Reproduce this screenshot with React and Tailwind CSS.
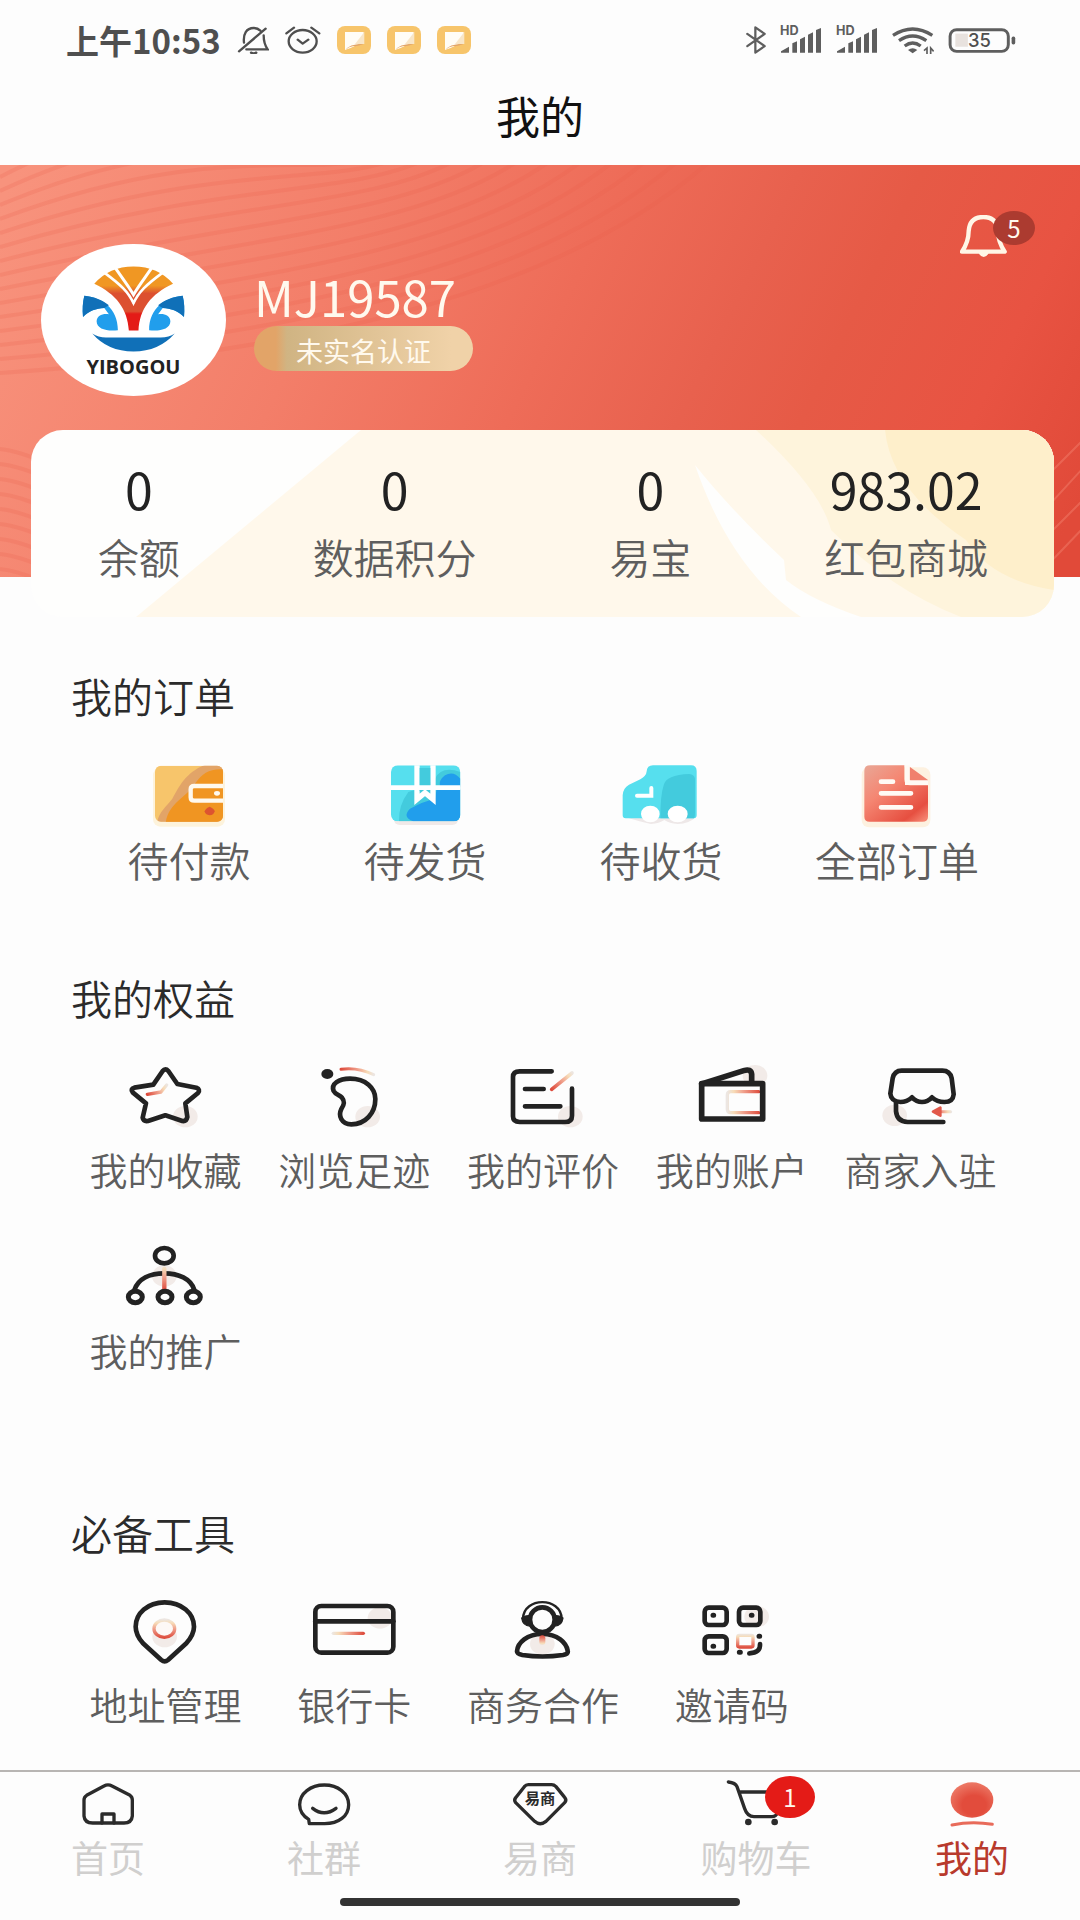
// Fading red accent used by the line icons
const Fade = ({ id, x1, y1, x2, y2 }) => (
  <linearGradient id={id} gradientUnits="userSpaceOnUse" x1={x1} y1={y1} x2={x2} y2={y2}>
    <stop offset="0" stopColor="#dd4b3c" />
    <stop offset="0.5" stopColor="#f0a08c" />
    <stop offset="0.8" stopColor="#f7dcb8" />
    <stop offset="1" stopColor="#ece6e2" />
  </linearGradient>
);

const Blob = ({ cx, cy }) => <ellipse cx={cx} cy={cy} rx="37" ry="32" fill="#f2ebe8" stroke="none" />;

const LineIcon = ({ children }) => (
  <svg
    viewBox="0 0 240 192"
    className="h-16 w-20 overflow-visible"
    fill="none"
    stroke="#222"
    strokeWidth="14"
    strokeLinecap="round"
    strokeLinejoin="round"
    aria-hidden="true"
  >
    {children}
  </svg>
);

//Order icons
const PayIcon = () => (
  <svg viewBox="0 0 240 192" className="h-16 w-20 overflow-visible" fill="none" aria-hidden="true">
    <rect x="12" y="18" width="216" height="176" rx="22" fill="#fdf3dc" />
    <clipPath id="payClip">
      <rect x="18" y="11" width="204" height="168" rx="18" />
    </clipPath>
    <g clipPath="url(#payClip)">
      <rect x="18" y="11" width="204" height="168" fill="#f7c56b" />
      <path d="M222 8H170C110 30 90 75 70 110C50 135 30 150 24 182H222Z" fill="#e2a468" />
      <path d="M222 22C180 20 160 35 140 62C110 110 60 120 50 182H222Z" fill="#f09522" />
      <path d="M232 72H136Q125 72 125 82V106Q125 116 136 116H232" stroke="#fff9ee" strokeWidth="13" fill="#f09522" />
    </g>
    <ellipse cx="204" cy="94" rx="9" ry="7" fill="#fff9ee" />
    <path d="M182 134Q198 142 197 148Q194 160 182 160Q168 158 167 148Q168 140 182 134Z" fill="#dd5430" />
  </svg>
);

const ShipIcon = () => (
  <svg viewBox="0 0 240 192" className="h-16 w-20 overflow-visible" fill="none" aria-hidden="true">
    <rect x="26" y="22" width="194" height="167" rx="18" fill="#f0e9e8" />
    <clipPath id="shipClip">
      <rect x="18" y="10" width="208" height="168" rx="20" />
    </clipPath>
    <g clipPath="url(#shipClip)">
      <rect x="18" y="10" width="208" height="168" fill="#56dfee" />
      <path d="M226 30Q170 10 150 50Q110 80 70 90Q40 130 42 178H226Z" fill="#43cbdd" />
      <path d="M226 50Q205 25 180 40Q160 55 165 74H226Z" fill="#219eec" />
      <path d="M226 82H155L150 110Q115 118 75 140Q50 165 85 178H226Z" fill="#219eec" />
      <path d="M10 77H232" stroke="#fff" strokeWidth="14" />
      <path d="M96 0V112L120 92L144 112V0" stroke="#fff" strokeWidth="16" />
      <path d="M104 18H136V82L120 78L104 88Z" fill="#43cbdd" />
      <path d="M90 77H150" stroke="#fff" strokeWidth="14" />
    </g>
  </svg>
);

const ReceiveIcon = () => (
  <svg viewBox="0 0 240 192" className="h-16 w-20 overflow-visible" fill="none" aria-hidden="true">
    <path d="M12 165H225Q205 185 170 186Q145 184 130 174Q115 184 90 186Q60 180 12 165Z" fill="#eee8e8" />
    <path d="M96 10H210Q227 10 227 27V160Q227 169 218 169H14Q5 169 5 160V100Q6 78 24 68L58 52Q76 42 77 28Q78 10 96 10Z" fill="#56dfee" />
    <path d="M205 36Q135 38 128 70Q118 100 118 169H218Q222 169 222 150V50Q220 38 205 36Z" fill="#43cbdd" />
    <path d="M91 78V101H48" stroke="#fff" strokeWidth="12" strokeLinecap="round" />
    <ellipse cx="88" cy="156" rx="28" ry="25" fill="#fff" />
    <ellipse cx="170" cy="156" rx="30" ry="25" fill="#fff" />
  </svg>
);

const AllOrdersIcon = () => (
  <svg viewBox="0 0 240 192" className="h-16 w-20 overflow-visible" fill="none" aria-hidden="true">
    <linearGradient id="docFill" x1="0" y1="0" x2="0.9" y2="1">
      <stop offset="0" stopColor="#e9a796" />
      <stop offset="0.4" stopColor="#f58672" />
      <stop offset="0.85" stopColor="#e64f40" />
      <stop offset="1" stopColor="#f4826e" />
    </linearGradient>
    <rect x="14" y="16" width="206" height="180" rx="22" fill="#fdf1e0" />
    <path d="M40 10H142V52Q142 70 160 70H213V164Q213 179 196 179H38Q22 179 22 164V26Q22 10 40 10Z" fill="url(#docFill)" />
    <path d="M158 14L213 54V58H166Q158 58 158 50Z" fill="#f0806d" />
    <path d="M151 10V62H213" stroke="#fffaf4" strokeWidth="14" />
    <path d="M72 59H108M72 94H162M72 136H162" stroke="#fffaf4" strokeWidth="14" strokeLinecap="round" />
  </svg>
);

//Benefit icons
const StarIcon = () => (
  <LineIcon>
    <Fade id="starFade" x1="67" y1="94" x2="125" y2="65" />
    <Blob cx="181" cy="161" />
    <path d="M113 24Q121 14 130 24L157 63L214 74Q227 79 219 90L181 121L187 162Q184 176 172 174L121 157L69 174Q55 176 53 164L63 121L23 88Q15 78 28 74L85 65Z" />
    <path d="M67 94L108 87L125 66" stroke="url(#starFade)" strokeWidth="10" />
  </LineIcon>
);

const FootIcon = () => (
  <LineIcon>
    <Fade id="footFade" x1="81" y1="19" x2="179" y2="35" />
    <Blob cx="161" cy="161" />
    <ellipse cx="40" cy="33" rx="18" ry="15" fill="#222" stroke="none" />
    <path d="M81 19Q131 12 179 35" stroke="url(#footFade)" strokeWidth="9" />
    <path d="M59 84C50 62 75 47 108 47C155 47 184 75 184 108C184 150 155 184 112 184C82 184 72 158 82 138C90 126 94 116 84 104C76 96 64 94 59 84Z" />
  </LineIcon>
);

const ReviewIcon = () => (
  <LineIcon>
    <Fade id="reviewFade" x1="146" y1="79" x2="209" y2="29" />
    <Blob cx="202" cy="161" />
    <path d="M146 25H50Q30 25 30 42V160Q30 177 50 177H186Q207 177 207 158V77M66 78H122M66 130H172" />
    <path d="M146 79L207 30" stroke="url(#reviewFade)" strokeWidth="11" />
  </LineIcon>
);

const AccountIcon = () => (
  <LineIcon>
    <Fade id="accountFade" x1="204" y1="90" x2="106" y2="90" />
    <Blob cx="189" cy="38" />
    <path d="M200 86H116Q106 86 106 96V139Q106 149 116 149H200" stroke="url(#accountFade)" strokeWidth="10" />
    <path d="M29 63L155 23Q177 16 179 34V60" strokeWidth="17" />
    <path d="M29 62H212V168H29Z" strokeWidth="17" />
  </LineIcon>
);

const ShopIcon = () => (
  <LineIcon>
    <Fade id="shopFade" x1="160" y1="146" x2="211" y2="146" />
    <Blob cx="41" cy="157" />
    <path d="M62 23H184Q207 23 212 46L218 94Q216 117 190 117Q168 117 153 103Q140 117 123 117Q106 117 93 103Q78 117 58 117Q30 115 28 92L35 46Q40 23 62 23Z" />
    <path d="M45 118V145Q48 176 80 177H187" />
    <path d="M182 146H209" stroke="url(#shopFade)" strokeWidth="9" />
    <path d="M156 146L178 134V158Z" fill="#e1584a" stroke="#e1584a" strokeWidth="8" />
  </LineIcon>
);

const PromoteIcon = () => (
  <LineIcon>
    <Fade id="promoteFade" x1="118" y1="138" x2="118" y2="60" />
    <Blob cx="118" cy="96" />
    <ellipse cx="118" cy="35" rx="28" ry="23" />
    <path d="M28 138C40 104 75 88 118 88C160 88 198 104 208 138" />
    <path d="M118 74V138" stroke="url(#promoteFade)" strokeWidth="13" />
    <ellipse cx="31" cy="159" rx="21" ry="17" strokeWidth="15" />
    <ellipse cx="120" cy="159" rx="21" ry="17" strokeWidth="15" />
    <ellipse cx="205" cy="159" rx="21" ry="17" strokeWidth="15" />
  </LineIcon>
);

//Tool icons
const AddressIcon = () => (
  <LineIcon>
    <Fade id="addressFade" x1="118" y1="120" x2="118" y2="64" />
    <Blob cx="119" cy="116" />
    <path d="M119 13C68 13 32 46 32 86C32 108 42 122 54 136L109 186Q119 194 129 186L184 136C196 122 207 108 207 86C207 46 170 13 119 13Z" />
    <ellipse cx="118" cy="92" rx="31" ry="26" stroke="url(#addressFade)" strokeWidth="10" fill="#fdf8f6" />
  </LineIcon>
);

const BankIcon = () => (
  <LineIcon>
    <Fade id="bankFade" x1="150" y1="106" x2="55" y2="106" />
    <Blob cx="198" cy="60" />
    <rect x="4" y="24" width="234" height="140" rx="18" />
    <path d="M4 70H238" />
    <path d="M58 106H148" stroke="url(#bankFade)" strokeWidth="10" />
  </LineIcon>
);

const BusinessIcon = () => (
  <LineIcon>
    <Fade id="businessFade" x1="118" y1="112" x2="118" y2="142" />
    <Blob cx="118" cy="138" />
    <path d="M60 62C62 -4 174 -4 176 62" strokeWidth="7" />
    <path d="M56 60Q72 50 84 54V84Q60 86 56 60ZM180 60Q164 50 152 54V84Q176 86 180 60Z" fill="#222" strokeWidth="4" />
    <ellipse cx="118" cy="65" rx="37" ry="37" fill="#fdfdfd" />
    <path d="M118 108C72 108 44 134 42 160C42 167 48 169 58 171Q118 180 180 171C190 169 196 166 194 158C190 134 164 108 118 108Z" />
    <path d="M118 121V132" stroke="url(#businessFade)" strokeWidth="18" />
  </LineIcon>
);

const InviteIcon = () => (
  <LineIcon>
    <Fade id="inviteFade" x1="160" y1="150" x2="160" y2="108" />
    <Blob cx="194" cy="56" />
    <rect x="38" y="29" width="66" height="52" rx="12" />
    <rect x="141" y="29" width="64" height="52" rx="12" />
    <rect x="38" y="115" width="66" height="50" rx="12" />
    <path d="M204 138Q206 165 172 166" />
    <path d="M63 52H65M178 52H180M63 145H65M201 115H203M142 163H145" strokeWidth="15" />
    <rect x="137" y="112" width="46" height="35" rx="5" stroke="url(#inviteFade)" strokeWidth="10" />
  </LineIcon>
);

//Tab bar icons
const TabIcon = ({ children }) => (
  <svg
    viewBox="0 0 180 144"
    className="h-12 w-15 overflow-visible"
    fill="none"
    stroke="#2b2b2b"
    strokeWidth="10"
    strokeLinecap="round"
    strokeLinejoin="round"
    aria-hidden="true"
  >
    {children}
  </svg>
);

const HomeIcon = () => (
  <TabIcon>
    <path d="M78 18Q90 11 102 18L156 46Q163 51 163 60V108Q161 129 138 129H44Q20 129 18 108V60Q18 51 26 46Z" />
    <path d="M72 129V102H108V129" />
  </TabIcon>
);

const GroupIcon = () => (
  <TabIcon>
    <path d="M46 131H92C134 131 164 108 164 74C164 40 132 15 91 15C50 15 17 40 17 74C17 94 28 108 44 118Z" />
    <path d="M56 85Q90 112 126 85" />
  </TabIcon>
);

const MerchantIcon = () => (
  <TabIcon>
    <path d="M55 14H125Q132 14 138 20L164 52Q171 60 164 68L108 124Q90 138 74 124L17 68Q11 60 17 53L43 20Q48 14 55 14Z" />
    <text x="90" y="73" textAnchor="middle" fontSize="46" fontWeight="700" fill="#2b2b2b" stroke="none">
      易商
    </text>
  </TabIcon>
);

const CartIcon = () => (
  <TabIcon>
    <path d="M7 6Q28 8 33 20L56 86Q64 110 84 110H138Q150 110 155 98L168 36H42" />
    <circle cx="67" cy="126" r="10" fill="#2b2b2b" stroke="none" />
    <circle cx="146" cy="126" r="10" fill="#2b2b2b" stroke="none" />
  </TabIcon>
);

const MineIcon = () => (
  <TabIcon>
    <radialGradient id="mineFill" cx="0.55" cy="0.65" r="0.7">
      <stop offset="0.4" stopColor="#e24c3c" />
      <stop offset="1" stopColor="#ee7f6c" />
    </radialGradient>
    <ellipse cx="90" cy="60" rx="64" ry="53" fill="url(#mineFill)" stroke="none" />
    <path d="M30 135Q90 122 151 133" stroke="#e86b5a" strokeWidth="9" />
  </TabIcon>
);

//Status bar
const Signal = () => (
  <svg viewBox="0 0 126 84" className="h-7 w-[42px] overflow-visible" fill="#5e5e5e" aria-hidden="true">
    <text x="0" y="28" fontSize="38" fontWeight="700" fontFamily="Inter, sans-serif">
      HD
    </text>
    <path d="M3 80V76L27 62V80ZM37 80V52L51 46V80ZM60 80V40L75 32V80ZM84 80V26L99 19V80ZM108 80V12L123 6V80Z" />
  </svg>
);

const Sticker = () => (
  <svg viewBox="0 0 102 84" className="h-7 w-[34px]" aria-hidden="true">
    <rect width="102" height="84" rx="24" fill="#f7c56b" />
    <path d="M24 18H80V42Q66 58 24 72Z" fill="#fffdf6" />
    <path d="M82 18V54H54Z" fill="#f8e6c8" />
    <path d="M24 72Q40 52 80 54Q60 62 50 60Q36 62 24 72Z" fill="#e2a468" />
  </svg>
);

const StatusBar = () => (
  <div className="flex h-20 items-center justify-between pr-16 pl-[66px] text-[#4f4f4f]">
    <div className="flex items-center gap-4">
      <span className="text-[33px] leading-10 font-bold">上午10:53</span>
      <svg viewBox="0 0 96 84" className="h-7 w-8" fill="none" stroke="#4f4f4f" strokeWidth="7" strokeLinecap="round" aria-hidden="true">
        <path d="M6 76L86 8M21 50C18 24 28 6 50 6Q62 6 70 14M80 28Q80 54 92 70H28" />
        <path d="M42 80Q50 84 58 80" />
      </svg>
      <svg viewBox="0 0 108 84" className="h-7 w-9" fill="none" stroke="#4f4f4f" strokeWidth="7" strokeLinecap="round" strokeLinejoin="round" aria-hidden="true">
        <ellipse cx="53" cy="46" rx="42" ry="34" />
        <path d="M4 22L27 5M79 5L103 22M38 41L53 53L70 41" />
      </svg>
      <Sticker />
      <Sticker />
      <Sticker />
    </div>
    <div className="flex items-center gap-[14px]">
      <svg viewBox="0 0 62 86" className="h-7 w-5" fill="none" stroke="#5e5e5e" strokeWidth="7" strokeLinejoin="round" strokeLinecap="round" aria-hidden="true">
        <path d="M4 24L58 62L29 82V4L58 24L4 62" />
      </svg>
      <Signal />
      <Signal />
      <svg viewBox="0 0 126 84" className="h-7 w-[42px]" fill="none" stroke="#5e5e5e" strokeWidth="10" aria-hidden="true">
        <path d="M3 28Q62 -10 121 28M21 44Q62 16 103 44M38 60Q62 42 86 60" />
        <path d="M48 72Q62 62 76 72L62 82Z" fill="#5e5e5e" stroke="none" />
        <path d="M96 74L105 66V84M116 86V66L125 76" strokeWidth="5" />
      </svg>
      <svg viewBox="0 0 204 76" className="h-[25px] w-[68px]" fill="none" aria-hidden="true">
        <rect x="21" y="17" width="38" height="40" fill="#e8e2de" />
        <rect x="5" y="5" width="177" height="66" rx="20" stroke="#5e5e5e" strokeWidth="9" />
        <rect x="192" y="26" width="11" height="24" rx="5" fill="#5e5e5e" />
        <text x="94" y="57" textAnchor="middle" fontSize="56" fontWeight="500" fontFamily="Inter, sans-serif" fill="#4f4f4f">
          35
        </text>
      </svg>
    </div>
  </div>
);

const ripples = Array.from({ length: 15 }, (_, i) => i);

const BannerArt = () => (
  <svg viewBox="0 0 1080 412" preserveAspectRatio="none" className="absolute inset-0 h-full w-full" fill="none" aria-hidden="true">
    <linearGradient id="bannerFill" gradientUnits="userSpaceOnUse" x1="20" y1="0" x2="1010" y2="480">
      <stop offset="0" stopColor="#f8937d" />
      <stop offset="0.3" stopColor="#f37e69" />
      <stop offset="0.5" stopColor="#ee6c58" />
      <stop offset="0.64" stopColor="#e8614e" />
      <stop offset="0.74" stopColor="#e65a46" />
      <stop offset="0.88" stopColor="#e85342" />
      <stop offset="1" stopColor="#e14a39" />
    </linearGradient>
    <rect width="1080" height="412" fill="url(#bannerFill)" />
    <g stroke="#e95f4c" strokeOpacity="0.2" strokeWidth="4">
      {ripples.map((i) => (
        <path
          key={i}
          d={`M0 ${208 - i * 14}C${300 - i * 9} ${188 - i * 19} ${560 - i * 24} ${130 - i * 11} ${710 - i * 32} -4`}
        />
      ))}
      {ripples.slice(0, 9).map((i) => (
        <path key={i} d={`M0 ${284 + i * 15}Q20 ${286 + i * 15} 50 ${300 + i * 15}`} />
      ))}
    </g>
    <path d="M1040 318L1084 274M1040 350L1084 302M1040 378L1084 334M1040 408L1084 362" stroke="#ee7462" strokeOpacity="0.6" strokeWidth="2" />
  </svg>
);

const Avatar = () => (
  <div className="mt-[33px] flex h-[152px] w-[185px] flex-col items-center rounded-[50%] bg-white pt-5">
    <svg viewBox="120 60 316 270" className="h-[90px] w-[105px]" aria-hidden="true">
      <linearGradient id="fanFill" x1="0" y1="0" x2="0" y2="1">
        <stop offset="0.3" stopColor="#f09723" />
        <stop offset="0.42" stopColor="#dc5030" />
        <stop offset="0.7" stopColor="#dc5030" />
        <stop offset="0.74" stopColor="#e41b17" />
      </linearGradient>
      <path d="M160 119Q205 67 278 67Q352 67 397 119C330 150 296 195 293 260H264C260 195 226 150 160 119Z" fill="url(#fanFill)" />
      <g fill="none" stroke="#fff" strokeWidth="9">
        <path d="M222 70C250 110 262 125 278 152C294 125 306 110 334 70" />
        <path d="M188 84C240 122 264 145 278 178C292 145 316 122 368 84" strokeWidth="8" />
      </g>
      <path d="M278 186L296 160L290 200H266L260 160Z" fill="#dc5030" />
      {["", "translate(556 0) scale(-1 1)"].map((flip) => (
        <g key={flip} transform={flip}>
          <path d="M130 155C180 160 231 190 231 259C200 263 167 256 167 232C168 214 186 208 204 211L190 192C165 194 145 200 126 219C124 195 125 175 130 155Z" fill="#219eec" />
          <path d="M130 155C160 158 185 168 204 184L190 192C165 194 145 200 126 219C124 195 125 175 130 155Z" fill="#1070b8" />
        </g>
      ))}
      <path d="M154 269Q172 281 195 281H360Q385 281 402 269Q355 323 278 323Q200 323 154 269Z" fill="#1070b8" />
    </svg>
    <span className="font-['Open_Sans','Liberation_Sans',sans-serif] text-[20px] leading-[26px] font-bold text-[#222]">
      YIBOGOU
    </span>
  </div>
);

const balances = [
  { label: "余额", value: "0" },
  { label: "数据积分", value: "0" },
  { label: "易宝", value: "0" },
  { label: "红包商城", value: "983.02" },
];

const orders = [
  { label: "待付款", Icon: PayIcon },
  { label: "待发货", Icon: ShipIcon },
  { label: "待收货", Icon: ReceiveIcon },
  { label: "全部订单", Icon: AllOrdersIcon },
];

const benefits = [
  { label: "我的收藏", Icon: StarIcon },
  { label: "浏览足迹", Icon: FootIcon },
  { label: "我的评价", Icon: ReviewIcon },
  { label: "我的账户", Icon: AccountIcon },
  { label: "商家入驻", Icon: ShopIcon },
  { label: "我的推广", Icon: PromoteIcon },
];

const tools = [
  { label: "地址管理", Icon: AddressIcon },
  { label: "银行卡", Icon: BankIcon },
  { label: "商务合作", Icon: BusinessIcon },
  { label: "邀请码", Icon: InviteIcon },
];

const tabs = [
  { label: "首页", Icon: HomeIcon },
  { label: "社群", Icon: GroupIcon },
  { label: "易商", Icon: MerchantIcon },
  { label: "购物车", Icon: CartIcon, badge: 1 },
  { label: "我的", Icon: MineIcon, active: true },
];

const Profile = () => (
  <section className="relative pt-[46px] pb-[181px]">
    <BannerArt />
    <div className="relative flex items-start pr-[45px] pl-[41px]">
      <Avatar />
      <div className="mt-[57px] ml-7 flex flex-col items-start">
        <span className="text-[49px] leading-[56px] text-[#fff9ee]">MJ19587</span>
        <a
          href="#verify"
          className="mt-[2px] rounded-full bg-linear-to-r from-[#e2a468] from-10% via-[#d0b483] via-15% to-[#f0d2a8] to-90% px-[42px] pt-1 text-[27px] leading-[41px] text-[#fff9ee]"
        >
          未实名认证
        </a>
      </div>
      <button type="button" aria-label="消息" className="relative ml-auto h-[46px] w-[75px]">
        <svg viewBox="0 0 144 126" className="absolute top-1 left-0 h-[42px] w-12" fill="none" stroke="#fff6e6" strokeWidth="13" strokeLinejoin="round" aria-hidden="true">
          <path d="M6 110Q26 80 26 48C28 20 44 6 70 6C98 6 112 20 114 48Q114 80 134 110Z" />
          <path d="M56 114H86Q80 126 71 126Q62 126 56 114Z" fill="#fff6e6" stroke="none" />
        </svg>
        <span className="absolute top-0 right-0 h-[34px] w-[42px] rounded-[50%] bg-[#ac3b30] text-center text-[24px] leading-[34px] text-[#fff9ee]">
          5
        </span>
      </button>
    </div>
  </section>
);

const Balances = () => (
  <section className="relative mr-[26px] -mt-[147px] ml-[31px] overflow-hidden rounded-[32px] bg-[#fefefd] pt-[30px] pb-[37px]">
    <svg viewBox="0 0 1023 187" preserveAspectRatio="none" className="absolute inset-0 h-full w-full" aria-hidden="true">
      <path d="M330 0H1023V187H105Z" fill="#fff8eb" />
      <path d="M664 35Q700 80 753 130L755 150Q780 170 830 187H770Q700 140 664 35Z" fill="#fefefd" />
      <path d="M725 0Q790 60 800 100Q860 160 930 187H1023V0Z" fill="#fef4dc" />
      <path d="M854 0Q860 60 935 110Q960 150 1023 160V0Z" fill="#feefcb" />
    </svg>
    <div className="relative mr-5 -ml-5 grid grid-cols-4">
      {balances.map(({ label, value }) => (
        <a key={label} href="#balance" className="flex flex-col items-center gap-4">
          <span className="text-[50px] leading-[56px] text-[#222]">{value}</span>
          <span className="text-[41px] leading-12 font-[350] whitespace-nowrap text-[#5e5e5e]">{label}</span>
        </a>
      ))}
    </div>
  </section>
);

const Heading = ({ children }) => (
  <h2 className="text-[41px] leading-12 font-[350] text-[#2b2b2b]">{children}</h2>
);

const App = () => {
  return (
    <div
      lang="zh-CN"
      className="flex min-h-screen flex-col bg-[#fdfdfd] font-['Noto_Sans_CJK_SC',sans-serif]"
    >
      <header>
        <StatusBar />
        <h1 className="pb-[15px] text-center text-[44px] leading-[70px] font-normal text-[#111]">我的</h1>
      </header>

      <main className="flex-1">
        <Profile />
        <Balances />

        <section className="mt-[54px] pr-[65px] pl-[71px]">
          <Heading>我的订单</Heading>
          <div className="mt-[43px] grid grid-cols-4">
            {orders.map(({ label, Icon }) => (
              <a key={label} href="#orders" className="flex flex-col items-center gap-[9px]">
                <Icon />
                <span className="text-[41px] leading-12 font-[350] whitespace-nowrap text-[#5e5e5e]">{label}</span>
              </a>
            ))}
          </div>
        </section>

        <section className="mt-[90px] pr-[65px] pl-[71px]">
          <Heading>我的权益</Heading>
          <div className="mt-[42px] grid grid-cols-5 gap-y-[51px]">
            {benefits.map(({ label, Icon }) => (
              <a key={label} href="#benefits" className="flex flex-col items-center gap-[18px]">
                <Icon />
                <span className="text-[38px] leading-12 font-[350] whitespace-nowrap text-[#5e5e5e]">{label}</span>
              </a>
            ))}
          </div>
        </section>

        <section className="mt-[134px] pr-[65px] pl-[71px]">
          <Heading>必备工具</Heading>
          <div className="mt-[42px] grid grid-cols-5">
            {tools.map(({ label, Icon }) => (
              <a key={label} href="#tools" className="flex flex-col items-center gap-[18px]">
                <Icon />
                <span className="text-[38px] leading-12 font-[350] whitespace-nowrap text-[#5e5e5e]">{label}</span>
              </a>
            ))}
          </div>
        </section>
      </main>

      <footer className="border-t-2 border-[#b8b5b3] pt-2 pb-[14px]">
        <nav className="grid grid-cols-5">
          {tabs.map(({ label, Icon, badge, active }) => (
            <a key={label} href="#tab" className="flex flex-col items-center gap-[7px]">
              <span className="relative">
                <Icon />
                {badge && (
                  <span className="absolute -top-1 left-[39px] h-[42px] w-[50px] rounded-[50%] bg-[#e41b17] text-center text-[24px] leading-[42px] text-[#fff9ee]">
                    {badge}
                  </span>
                )}
              </span>
              <span className={active ? "text-[37px] leading-11 text-[#b83a2c]" : "text-[37px] leading-11 text-[#d0cfce]"}>
                {label}
              </span>
            </a>
          ))}
        </nav>
        <div className="mx-auto mt-[19px] h-2 w-[400px] rounded-full bg-[#333]" />
      </footer>
    </div>
  );
};

export default App;
